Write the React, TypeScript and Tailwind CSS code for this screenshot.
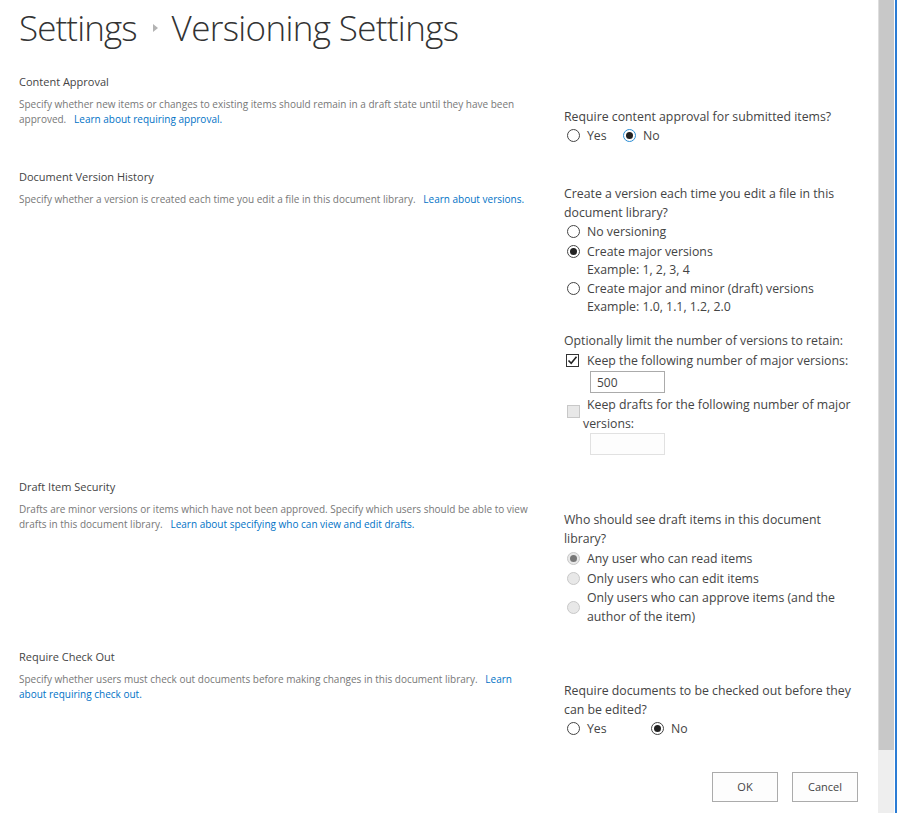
import type { ReactNode } from 'react';

function Radio({ checked = false, focus = false, disabled = false }: { checked?: boolean; focus?: boolean; disabled?: boolean }) {
  const ring = disabled
    ? 'border-[#c8c8c8] bg-[#e8e8e8]'
    : focus
      ? 'border-[#2a8dd4] bg-white'
      : 'border-[#444] bg-white';
  return (
    <span className={`flex h-[13px] w-[13px] shrink-0 items-center justify-center rounded-full border ${ring}`}>
      {checked && <span className={`h-[7px] w-[7px] rounded-full ${disabled ? 'bg-[#777]' : 'bg-[#222]'}`} />}
    </span>
  );
}

function Checkbox({ checked = false, disabled = false }: { checked?: boolean; disabled?: boolean }) {
  if (disabled) {
    return <span className="block h-[13px] w-[13px] shrink-0 border border-[#c8c8c8] bg-[#e8e8e8]" />;
  }
  return (
    <span className="flex h-[13px] w-[13px] shrink-0 items-center justify-center border border-[#333] bg-white">
      {checked && (
        <svg width="11" height="11" viewBox="0 0 11 11">
          <path d="M1.5 5.5 L4.2 8.3 L9.5 1.8" fill="none" stroke="#222" strokeWidth="1.6" />
        </svg>
      )}
    </span>
  );
}

function Option({ label, checked, focus, disabled }: { label: string; checked?: boolean; focus?: boolean; disabled?: boolean }) {
  return (
    <div className="flex items-center">
      <span className="ml-[3px]">
        <Radio checked={checked} focus={focus} disabled={disabled} />
      </span>
      <span className="ml-[7px] whitespace-nowrap">{label}</span>
    </div>
  );
}

function Section({
  title,
  lines,
  className,
  rightClass,
  children,
}: {
  title: string;
  lines: ReactNode[];
  className: string;
  rightClass: string;
  children: ReactNode;
}) {
  return (
    <section className={`flex ${className}`}>
      <div className="w-[545px] shrink-0">
        <h2 className="text-[11px] leading-[16px] text-[#444]">{title}</h2>
        <div className="mt-[7px] text-[10px] leading-[15px] text-[#777]">
          {lines.map((line, i) => (
            <div key={i} className="whitespace-nowrap">
              {line}
            </div>
          ))}
        </div>
      </div>
      <div className={`flex-1 whitespace-nowrap text-[12.3px] leading-[19px] text-[#444] ${rightClass}`}>{children}</div>
    </section>
  );
}

function Learn({ children }: { children: ReactNode }) {
  return <a className="text-[#0072c6]">{children}</a>;
}

export default function App() {
  return (
    <div className="flex min-h-[813px] bg-white font-['Open_Sans',sans-serif] text-[#444]">
      <main className="flex-1 pl-[19px] pr-[20px] pt-[5px]">
        {/* Page title with breadcrumb */}
        <h1 className="flex h-[46px] items-center whitespace-nowrap text-[35px] font-light leading-[46px] tracking-[-0.65px] text-[#333]">
          <span className="tracking-[-0.9px]">Settings</span>
          <svg className="ml-[16px] mr-[14px]" width="5" height="8" viewBox="0 0 5 8">
            <path d="M0 0 L5 4 L0 8 Z" fill="#b3b3b3" />
          </svg>
          <span>Versioning Settings</span>
        </h1>

        {/* Content Approval */}
        <Section
          title="Content Approval"
          className="mt-[23px]"
          rightClass="pt-[33px]"
          lines={[
            'Specify whether new items or changes to existing items should remain in a draft state until they have been',
            <>
              approved.&nbsp;&nbsp; <Learn>Learn about requiring approval.</Learn>
            </>,
          ]}
        >
          <div>Require content approval for submitted items?</div>
          <div className="flex h-[19px] items-center">
            <div className="w-[56px]">
              <Option label="Yes" />
            </div>
            <Option label="No" checked focus />
          </div>
        </Section>

        {/* Document Version History */}
        <Section
          title="Document Version History"
          className="mt-[24px]"
          rightClass="pt-[15px]"
          lines={[
            <>
              Specify whether a version is created each time you edit a file in this document library.&nbsp;&nbsp;{' '}
              <Learn>Learn about versions.</Learn>
            </>,
          ]}
        >
          <div>Create a version each time you edit a file in this</div>
          <div>document library?</div>
          <div className="flex h-[18px] items-center">
            <Option label="No versioning" />
          </div>
          <div className="flex h-[22px] items-center">
            <Option label="Create major versions" checked />
          </div>
          <div className="h-[16px] pl-[23px] leading-[16px]">Example: 1, 2, 3, 4</div>
          <div className="flex h-[20px] items-center">
            <Option label="Create major and minor (draft) versions" />
          </div>
          <div className="h-[17px] pl-[23px] leading-[17px]">Example: 1.0, 1.1, 1.2, 2.0</div>

          <div className="mt-[16px]">Optionally limit the number of versions to retain:</div>
          <div className="flex h-[21px] items-center">
            <span className="ml-[2px]">
              <Checkbox checked />
            </span>
            <span className="ml-[8px]">Keep the following number of major versions:</span>
          </div>
          <div className="ml-[26px] flex h-[22px] w-[75px] items-center border border-[#ababab] bg-white pl-[6px] text-[12px]">
            500
          </div>
          <div className="mt-[2px] flex items-start">
            <span className="ml-[3px] mt-[10px]">
              <Checkbox disabled />
            </span>
            <div className="ml-[3px]">
              <div className="pl-[4px]">Keep drafts for the following number of major</div>
              <div>versions:</div>
            </div>
          </div>
          <div className="ml-[26px] h-[22px] w-[75px] border border-[#e1e1e1] bg-[#fdfdfd]" />
        </Section>

        {/* Draft Item Security */}
        <Section
          title="Draft Item Security"
          className="mt-[24px]"
          rightClass="pt-[31px]"
          lines={[
            'Drafts are minor versions or items which have not been approved. Specify which users should be able to view',
            <>
              drafts in this document library.&nbsp;&nbsp;{' '}
              <Learn>Learn about specifying who can view and edit drafts.</Learn>
            </>,
          ]}
        >
          <div>Who should see draft items in this document</div>
          <div>library?</div>
          <div className="flex h-[20px] items-center">
            <Option label="Any user who can read items" checked disabled />
          </div>
          <div className="flex h-[20px] items-center">
            <Option label="Only users who can edit items" disabled />
          </div>
          <div className="flex items-center">
            <span className="ml-[3px]">
              <Radio disabled />
            </span>
            <div className="ml-[7px]">
              <div>Only users who can approve items (and the</div>
              <div>author of the item)</div>
            </div>
          </div>
        </Section>

        {/* Require Check Out */}
        <Section
          title="Require Check Out"
          className="mt-[23px]"
          rightClass="pt-[32px]"
          lines={[
            <>
              Specify whether users must check out documents before making changes in this document library.&nbsp;&nbsp;{' '}
              <Learn>Learn</Learn>
            </>,
            <Learn>about requiring check out.</Learn>,
          ]}
        >
          <div>Require documents to be checked out before they</div>
          <div>can be edited?</div>
          <div className="flex h-[19px] items-center">
            <div className="w-[84px]">
              <Option label="Yes" />
            </div>
            <Option label="No" checked />
          </div>
        </Section>

        {/* Actions */}
        <div className="mt-[34px] flex justify-end gap-[14px]">
          <button className="h-[30px] w-[66px] border border-[#ababab] bg-[#fdfdfd] text-[11px] text-[#444]">OK</button>
          <button className="h-[30px] w-[66px] border border-[#ababab] bg-[#fdfdfd] text-[11px] text-[#444]">Cancel</button>
        </div>
      </main>

      {/* Scrollbar */}
      <div className="flex w-[16px] flex-col">
        <div className="h-[750px] border-l border-[#dedede] bg-[#c8c8c8]" />
        <div className="flex-1 bg-[#eeeeee]" />
      </div>
      <div className="w-px bg-white" />
      <div className="w-[2px] bg-[#2b7cd4]" />
    </div>
  );
}
